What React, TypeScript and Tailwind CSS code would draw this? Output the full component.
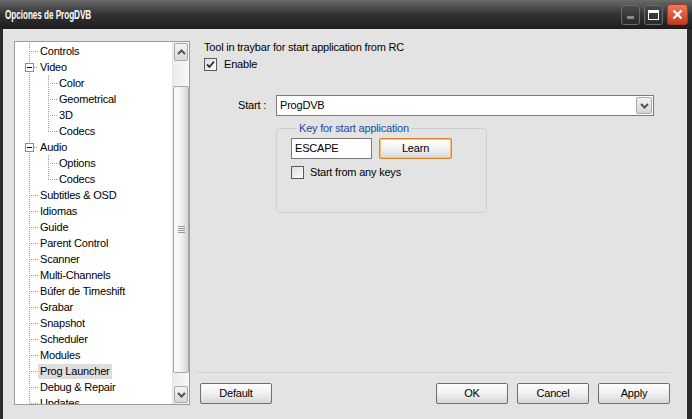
import React from 'react';

type Node = { label: string; level: 1 | 2; expanded?: boolean; lastChild?: boolean; selected?: boolean };

const nodes: Node[] = [
  { label: 'Controls', level: 1 },
  { label: 'Video', level: 1, expanded: true },
  { label: 'Color', level: 2 },
  { label: 'Geometrical', level: 2 },
  { label: '3D', level: 2 },
  { label: 'Codecs', level: 2, lastChild: true },
  { label: 'Audio', level: 1, expanded: true },
  { label: 'Options', level: 2 },
  { label: 'Codecs', level: 2, lastChild: true },
  { label: 'Subtitles & OSD', level: 1 },
  { label: 'Idiomas', level: 1 },
  { label: 'Guide', level: 1 },
  { label: 'Parent Control', level: 1 },
  { label: 'Scanner', level: 1 },
  { label: 'Multi-Channels', level: 1 },
  { label: 'Búfer de Timeshift', level: 1 },
  { label: 'Grabar', level: 1 },
  { label: 'Snapshot', level: 1 },
  { label: 'Scheduler', level: 1 },
  { label: 'Modules', level: 1 },
  { label: 'Prog Launcher', level: 1, selected: true },
  { label: 'Debug & Repair', level: 1 },
  { label: 'Updates', level: 1 },
];

const dot = { stroke: '#9a9a9a', strokeWidth: 1, strokeDasharray: '1 1' };

// tree connector lines for one row
const TreeLines: React.FC<{ node: Node }> = ({ node }) => {
  const w = node.level === 1 ? 23 : 42;
  return (
    <svg width={w} height={16} className="shrink-0">
      <line x1={14.5} y1={0} x2={14.5} y2={16} {...dot} />
      {node.level === 1 && !node.expanded && <line x1={16} y1={8.5} x2={23} y2={8.5} {...dot} />}
      {node.expanded && (
        <>
          <line x1={19} y1={8.5} x2={23} y2={8.5} {...dot} />
          <rect x={10.5} y={4.5} width={8} height={8} fill="#ffffff" stroke="#8c8c8c" />
          <line x1={12} y1={8.5} x2={17} y2={8.5} stroke="#000" />
        </>
      )}
      {node.level === 2 && (
        <>
          <line x1={33.5} y1={0} x2={33.5} y2={node.lastChild ? 9 : 16} {...dot} />
          <line x1={35} y1={8.5} x2={42} y2={8.5} {...dot} />
        </>
      )}
    </svg>
  );
};

const Chevron: React.FC<{ up?: boolean }> = ({ up }) => (
  <svg width="9" height="6" viewBox="0 0 9 6">
    <path d={up ? 'M1 5 L4.5 1.5 L8 5' : 'M1 1 L4.5 4.5 L8 1'} fill="none" stroke="#4a5366" strokeWidth="2" />
  </svg>
);

const CheckBox: React.FC<{ checked?: boolean }> = ({ checked }) => (
  <div className="w-[13px] h-[13px] border border-[#5a5a5a] bg-gradient-to-br from-[#dcdcdc] to-[#ffffff] flex items-center justify-center shrink-0">
    {checked && (
      <svg width="9" height="9" viewBox="0 0 9 9">
        <path d="M1 4.5 L3.5 7 L8 1.5" fill="none" stroke="#2b2b2b" strokeWidth="1.8" />
      </svg>
    )}
  </div>
);

const Btn: React.FC<{ label: string }> = ({ label }) => (
  <button className="w-[72px] h-[21px] rounded-[2px] border border-[#6e6e6e] bg-gradient-to-b from-[#ffffff] via-[#f0f0f0] to-[#d6d6d6] text-[11px] text-black leading-none">
    {label}
  </button>
);

export default function App() {
  return (
    <div className="w-[692px] h-[419px] flex flex-col bg-[#2a2a2a] overflow-hidden text-[11px] text-black tracking-[-0.2px]" style={{ fontFamily: '"Liberation Sans", Arial, sans-serif' }}>
      {/* title bar */}
      <div className="h-[29px] shrink-0 flex items-center justify-between bg-gradient-to-b from-[#6a6a6a] via-[#333333] to-[#1c1c1c] pl-[5px] pr-[4px]">
        <span className="inline-block origin-left scale-x-[0.63] text-white font-bold text-[13px] tracking-[-0.1px] whitespace-nowrap">
          Opciones de ProgDVB
        </span>
        <div className="flex items-center gap-[4px]">
          <div className="w-[19px] h-[20px] rounded-[3px] border border-[#6a6a6a] bg-gradient-to-b from-[#4a4a4a] to-[#2a2a2a] flex items-end justify-center pb-[5px]">
            <div className="w-[7px] h-[3px] bg-[#8a8a8a]" />
          </div>
          <div className="w-[19px] h-[20px] rounded-[3px] border border-[#6a6a6a] bg-gradient-to-b from-[#4a4a4a] to-[#2a2a2a] flex items-center justify-center">
            <div className="w-[11px] h-[10px] border border-white border-t-[3px]" />
          </div>
          <div className="w-[21px] h-[21px] rounded-[3px] border border-[#a33a22] bg-gradient-to-b from-[#f07a5c] to-[#c8381c] flex items-center justify-center">
            <svg width="11" height="11" viewBox="0 0 11 11">
              <path d="M1.5 1.5 L9.5 9.5 M9.5 1.5 L1.5 9.5" stroke="#ffffff" strokeWidth="2.2" />
            </svg>
          </div>
        </div>
      </div>

      {/* body */}
      <div className="flex-1 flex bg-[#e3e3e3] ml-[3px] mr-[5px]">
        {/* tree */}
        <div className="pl-[11px] pt-[12px]">
          <div className="w-[176px] h-[364px] border border-[#9c9c9c] bg-white flex">
            <div className="flex-1 overflow-hidden pt-[1px]">
              {nodes.map((n, i) => (
                <div key={i} className="h-[16px] flex items-center whitespace-nowrap">
                  <TreeLines node={n} />
                  <span className={`px-[2px] leading-[15px] ${n.selected ? 'bg-[#dedede]' : ''}`}>{n.label}</span>
                </div>
              ))}
            </div>
            <div className="w-[17px] flex flex-col bg-gradient-to-r from-[#ececec] to-[#f8f8f8] border-l border-[#e4e4e4]">
              <div className="h-[18px] mx-[1px] mt-[1px] border border-[#a8a8a8] rounded-[2px] bg-gradient-to-b from-[#f4f4f4] to-[#d8d8d8] flex items-center justify-center">
                <Chevron up />
              </div>
              <div className="h-[25px]" />
              <div className="h-[287px] border border-[#a8a8a8] rounded-[2px] bg-gradient-to-r from-[#fafafa] via-[#f2f2f2] to-[#d4d4d4] flex items-center justify-center">
                <div className="flex flex-col gap-[1px]">
                  <div className="w-[7px] h-[1px] bg-[#9a9a9a]" />
                  <div className="w-[7px] h-[1px] bg-[#9a9a9a]" />
                  <div className="w-[7px] h-[1px] bg-[#9a9a9a]" />
                  <div className="w-[7px] h-[1px] bg-[#9a9a9a]" />
                </div>
              </div>
              <div className="flex-1" />
              <div className="h-[17px] mx-[1px] mb-[1px] border border-[#a8a8a8] rounded-[2px] bg-gradient-to-b from-[#f4f4f4] to-[#d8d8d8] flex items-center justify-center">
                <Chevron />
              </div>
            </div>
          </div>
        </div>

        {/* right side */}
        <div className="w-[475px] ml-[5px] flex flex-col">
          <div className="h-[344px] border-b border-[#d2d2d2] pl-[9px] pt-[11px]">
            <div className="h-[14px] leading-[14px]">Tool in traybar for start application from RC</div>
            <div className="mt-[4px] h-[13px] flex items-center gap-[7px]">
              <CheckBox checked />
              <span>Enable</span>
            </div>

            <div className="mt-[24px] flex items-center">
              <span className="w-[62px] text-right">Start :</span>
              <div className="ml-[10px] w-[378px] h-[21px] border border-[#7a7a7a] bg-white flex items-center justify-between pl-[3px] pr-[1px]">
                <span>ProgDVB</span>
                <div className="w-[16px] h-[17px] border border-[#a8a8a8] rounded-[2px] bg-gradient-to-b from-[#f4f4f4] to-[#d4d4d4] flex items-center justify-center">
                  <Chevron />
                </div>
              </div>
            </div>

            <fieldset className="ml-[72px] mt-[5px] w-[211px] h-[92px] border border-[#cfcfcf] rounded-[4px] pl-[14px] pt-[3px]">
              <legend className="ml-[6px] px-[2px] text-[#1a4aa8] leading-[14px]">Key for start application</legend>
              <div className="flex items-center gap-[7px]">
                <div className="w-[81px] h-[21px] border border-[#7a7a7a] bg-white flex items-center pl-[3px]">ESCAPE</div>
                <button className="w-[73px] h-[21px] rounded-[2px] border border-[#d9842c] bg-gradient-to-b from-[#ffffff] via-[#f2f2f2] to-[#d8d8d8] shadow-[inset_0_0_0_1px_#f5c27e] text-[11px] leading-none">
                  Learn
                </button>
              </div>
              <div className="mt-[7px] h-[13px] flex items-center gap-[6px]">
                <CheckBox />
                <span>Start from any keys</span>
              </div>
            </fieldset>
          </div>

          <div className="flex items-start pt-[10px] pl-[5px]">
            <Btn label="Default" />
            <div className="ml-auto flex gap-[9px]">
              <Btn label="OK" />
              <Btn label="Cancel" />
              <Btn label="Apply" />
            </div>
          </div>
        </div>
      </div>
    </div>
  );
}
